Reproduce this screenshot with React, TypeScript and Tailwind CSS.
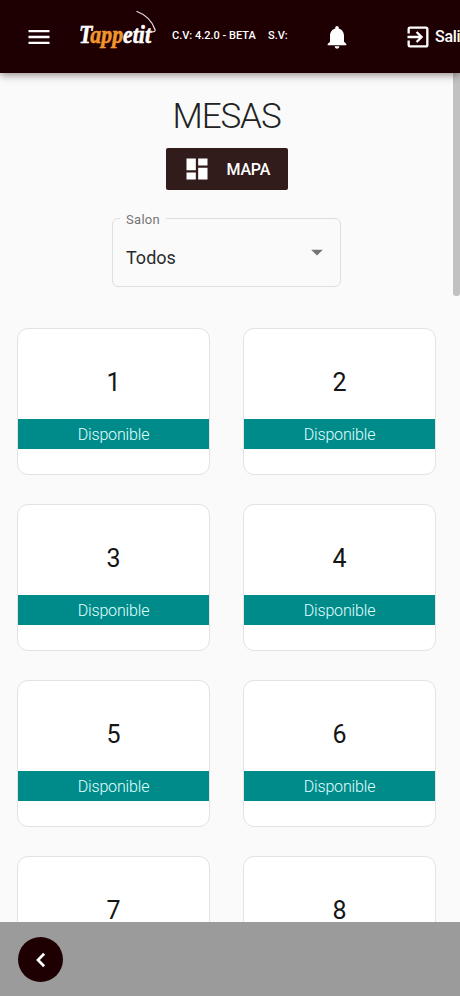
import {
  MdArrowDropDown,
  MdDashboard,
  MdExitToApp,
  MdMenu,
  MdNotifications,
} from 'react-icons/md';

interface Mesa {
  id: number;
  estado: string;
}

const mesas: Mesa[] = Array.from({ length: 8 }, (_, i) => ({
  id: i + 1,
  estado: 'Disponible',
}));

function Logo() {
  return (
    <svg width="80" height="42" viewBox="0 0 80 42" className="ml-[24px] shrink-0 overflow-visible">
      <text
        x="2"
        y="33"
        textLength="72"
        lengthAdjust="spacingAndGlyphs"
        fill="#fff"
        stroke="#fff"
        strokeWidth="0.6"
        className="font-['Liberation_Serif',serif] text-[26px] font-bold italic"
      >
        T<tspan fill="#f0962e" stroke="#f0962e">app</tspan>etit
      </text>
      <path d="M60 1.500C68 4.500 75 11 78 19.500c.6 2-.8 2.500-5 2.500" fill="none" stroke="#e8dcdc" strokeWidth="1.300" strokeLinecap="round" />
    </svg>
  );
}

function Header() {
  return (
    <header className="relative z-10 flex h-[73px] shrink-0 items-center bg-[#1e0003] text-white shadow-[0_2px_8px_rgba(30,0,3,0.45)]">
      <MdMenu className="ml-[25px] size-7 shrink-0" />
      <div className="-mt-[11px]">
        <Logo />
      </div>
      <span className="ml-[15px] w-[96px] shrink-0 whitespace-nowrap text-[11px] font-medium">C.V: 4.2.0 - BETA</span>
      <span className="w-[55px] shrink-0 whitespace-nowrap text-[11px] font-medium">S.V:</span>
      <MdNotifications className="size-7 shrink-0" />
      <div className="ml-[53px] flex w-[56px] shrink-0 items-center overflow-hidden">
        <MdExitToApp className="size-7 shrink-0" />
        <span className="ml-[3px] text-base font-medium tracking-[-0.3px]">Salir</span>
      </div>
    </header>
  );
}

function SalonSelect() {
  return (
    <fieldset className="mt-[18px] h-[79px] w-[229px] rounded-[6px] border border-[#dedede] px-[13px]">
      <legend className="-ml-[6px] h-[20px] px-[6px] text-[13px] leading-[24px] tracking-[0.3px] text-[#757575]">Salon</legend>
      <div className="flex items-center justify-between pt-[15px]">
        <span className="pt-px text-[18px] leading-7 text-[#2b2b2b]">Todos</span>
        <MdArrowDropDown className="-mt-[11px] -mr-[4px] size-7 text-[#757575]" />
      </div>
    </fieldset>
  );
}

function MesaCard({ mesa }: { mesa: Mesa }) {
  return (
    <div className="h-[147px] rounded-[11px] border border-[#e3e3e3] bg-white text-center">
      <div className="flex h-[90px] items-center justify-center pt-[17px] text-[25px] text-[#151515]">{mesa.id}</div>
      <div className="h-[30px] bg-[#008b8b] text-base font-light leading-[31px] tracking-[-0.15px] text-[#e2ffff]">{mesa.estado}</div>
    </div>
  );
}

export default function App() {
  return (
    <div className="flex h-[996px] w-[460px] flex-col overflow-hidden bg-[#fafafa] font-['Roboto',sans-serif]">
      <Header />

      <main className="relative min-h-0 flex-1 overflow-hidden">
        <div className="flex flex-col items-center pr-[7px]">
          <h1 className="mt-[23px] text-[35px] font-light leading-[42px] tracking-[-1.1px] text-[#222]">MESAS</h1>
          <button className="mt-[10px] flex h-[42px] w-[122px] items-center rounded-[2px] bg-[#321b1b] pl-[17px] text-white">
            <MdDashboard className="size-7" />
            <span className="ml-[16px] pt-px text-base font-medium tracking-[-0.2px]">MAPA</span>
          </button>
          <SalonSelect />
        </div>

        <div className="mt-[41px] grid grid-cols-2 gap-x-[33px] gap-y-[29px] pr-[24px] pl-[17px]">
          {mesas.map((mesa) => (
            <MesaCard key={mesa.id} mesa={mesa} />
          ))}
        </div>

        {/* Scrollbar thumb */}
        <div className="absolute top-0 right-0 h-[223px] w-[7px] rounded-b-[3px] bg-[#c1c1c1]" />
      </main>

      <footer className="flex h-[74px] shrink-0 items-center bg-[#9c9b9b] pl-[18px]">
        <button className="flex size-[45px] items-center justify-center rounded-full bg-[#1e0003] text-white">
          <svg viewBox="0 0 24 24" className="mt-px size-7 fill-none stroke-current" strokeWidth="2.300">
            <path d="M14.700 6.700L9.400 12l5.300 5.300" />
          </svg>
        </button>
      </footer>
    </div>
  );
}
